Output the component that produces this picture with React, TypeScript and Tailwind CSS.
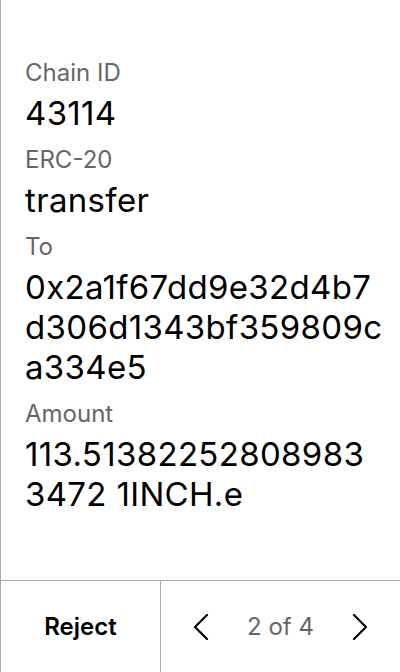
const fields = [
  { label: "Chain ID", value: "43114" },
  { label: "ERC-20", value: "transfer" },
  { label: "To", value: "0x2a1f67dd9e32d4b7d306d1343bf359809ca334e5" },
  { label: "Amount", value: "113.513822528089833472 1INCH.e" },
];

function Chevron({ dir }: { dir: "left" | "right" }) {
  return (
    <svg width="16" height="26" viewBox="0 0 16 26" fill="none" stroke="black" strokeWidth="2.2" strokeLinecap="round" strokeLinejoin="round">
      {dir === "left" ? <polyline points="14,1 2,13 14,25" /> : <polyline points="2,1 14,13 2,25" />}
    </svg>
  );
}

export default function App() {
  return (
    <div className="w-[400px] h-[672px] flex flex-col bg-white border-l border-[#a8a8a8] font-['Inter',sans-serif]">
      <div className="flex-1 pl-6 pr-4 pt-[58px]">
        {fields.map((f) => (
          <div key={f.label} className="mb-[12px]">
            <div className="text-[24px] leading-[30px] text-[#666]">{f.label}</div>
            <div className="mt-[5px] text-[33px] leading-[40px] tracking-[0.01em] text-black break-all">{f.value}</div>
          </div>
        ))}
      </div>
      <div className="h-[92px] flex border-t border-[#a8a8a8]">
        <div className="w-[159px] flex items-center justify-center text-[24px] font-semibold text-black">
          Reject
        </div>
        <div className="flex-1 flex items-center justify-between pl-[32px] pr-[32px] border-l border-[#a8a8a8]">
          <Chevron dir="left" />
          <span className="text-[24px] text-[#666]">2 of 4</span>
          <Chevron dir="right" />
        </div>
      </div>
    </div>
  );
}
